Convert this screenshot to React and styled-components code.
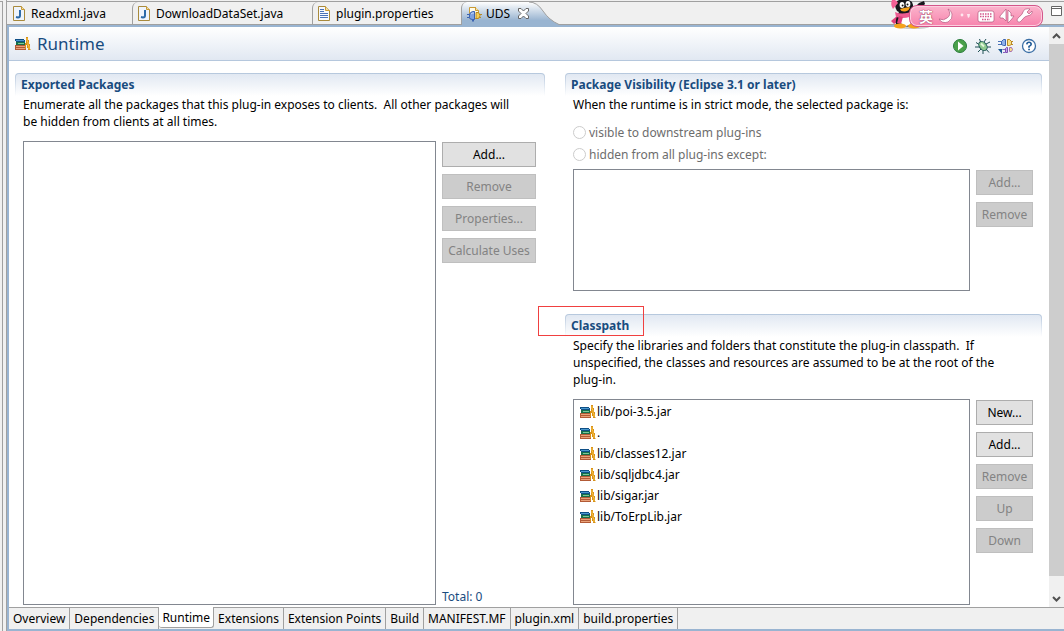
import React from "react";
import styled, { createGlobalStyle, css } from "styled-components";

const GlobalStyle = createGlobalStyle`
  * { box-sizing: border-box; }
  body { margin: 0; background: #f0f0f0; }
  body, button, input {
    font-family: "Noto Sans", "Noto Sans CJK SC", sans-serif;
    font-size: 12px;
    line-height: 17px;
    color: #000;
  }
`

const Workbench = styled.div`
  position: relative;
  display: flex;
  min-height: 100vh;
`

const Neighbour = styled.div`
  flex: none;
  width: 3px;
  margin: 1px 3px 0 0;
  border-top: 1px solid #a0a0a0;
  border-right: 1px solid #a0a0a0;
`

const Editor = styled.div`
  flex: 1;
  min-width: 0;
  display: flex;
  flex-direction: column;
  border-left: 1px solid #a0a0a0;
`

const TabBar = styled.nav`
  display: flex;
  height: 24px;
  margin-top: 1px;
  border-top: 1px solid #a0a0a0;
  border-bottom: 1px solid #a0a0a0;
`

const EditorTab = styled.button`
  display: flex;
  align-items: center;
  gap: 6px;
  width: ${({ $width }) => $width}px;
  height: 22px;
  padding: 0 0 0 5px;
  border: 0;
  border-left: 1px solid ${({ $first }) => ($first ? "transparent" : "#a0a0a0")};
  border-top-left-radius: 6px;
  background: #f0f0f0;
  white-space: nowrap;
`

const ActiveTab = styled.div`
  display: flex;
  align-items: center;
  gap: 4px;
  height: 23px;
  padding-left: 5px;
  border-left: 1px solid #a0a0a0;
  border-top-left-radius: 6px;
  background: linear-gradient(#fff, #99b4d1 80%);
`

const CloseButton = styled.button`
  display: flex;
  margin-left: 4px;
  padding: 0;
  border: 0;
  background: none;
`

const TabCurve = styled.svg`
  flex: none;
  height: 23px;
`

const Frame = styled.div`
  flex: 1;
  display: flex;
  flex-direction: column;
  border: solid #99b4d1;
  border-width: 2px 0 2px 2px;
  background: #fff;
`

const Viewport = styled.div`
  flex: 1;
  display: flex;
`

const Form = styled.main`
  flex: 1;
  min-width: 0;
  display: flex;
  flex-direction: column;
`

const FormHead = styled.header`
  display: flex;
  align-items: center;
  gap: 6px;
  height: 34px;
  padding: 0 12px 0 6px;
  border-bottom: 1px solid #b5c7dd;
  background: linear-gradient(#fff, #e1e8f2);
`

const FormTitle = styled.h1`
  flex: 1;
  margin: 0;
  font-size: 17px;
  font-weight: 400;
  line-height: 22px;
  color: #194c7f;
`

const Actions = styled.div`
  display: flex;
  gap: 7px;
  padding-top: 4px;
`

const IconButton = styled.button`
  display: flex;
  padding: 0;
  border: 0;
  background: none;
`

const Columns = styled.div`
  flex: 1;
  display: grid;
  grid-template-columns: minmax(0, 10fr) minmax(0, 9fr);
  gap: 20px;
  padding: 12px 7px 2px 6px;
`

const Column = styled.div`
  display: flex;
  flex-direction: column;
  gap: 23px;
`

const Section = styled.section`
  position: relative;
  display: flex;
  flex-direction: column;
  ${({ $grow }) => $grow && css`flex: 1;`}
`

const SectionTitle = styled.h2`
  height: 23px;
  margin: 0;
  padding: 2px 5px;
  border: 1px solid transparent;
  border-bottom: 0;
  border-radius: 4px 4px 0 0;
  background:
    linear-gradient(#e1e8f2, #fff) padding-box,
    linear-gradient(#b5c7dd, #fff) border-box;
  font-size: 12px;
  font-weight: 700;
  color: #194c7f;
`

const Description = styled.p`
  margin: 0 0 11px;
  padding: 0 28px 0 8px;
`

const Body = styled.div`
  flex: 1;
  display: flex;
  gap: 6px;
  padding: 0 9px 0 8px;
`

const ListBox = styled.ul`
  flex: 1;
  min-height: ${({ $height }) => $height || 122}px;
  margin: 0;
  padding: 1px 6px;
  border: 1px solid #828790;
  list-style: none;
`

const Entry = styled.li`
  display: flex;
  align-items: center;
  gap: 1px;
  height: 21px;
`

const Buttons = styled.div`
  display: flex;
  flex-direction: column;
  gap: 7px;
  width: ${({ $width }) => $width}px;
  padding-top: 1px;
`

const PushButton = styled.button`
  height: 25px;
  padding: 0;
  border: 1px solid #adadad;
  background: #e1e1e1;
  white-space: nowrap;

  &:disabled {
    border-color: #bfbfbf;
    background: #ccc;
    color: #838383;
  }
`

const Total = styled.span`
  margin-top: auto;
  color: #194c7f;
`

const Options = styled.div`
  display: flex;
  flex-direction: column;
  gap: 5px;
  padding: 0 8px 6px;
`

const Option = styled.label`
  display: flex;
  align-items: center;
  gap: 3px;
  color: #6d6d6d;

  input {
    appearance: none;
    width: 13px;
    height: 13px;
    margin: 0;
    border: 1px solid #ccc;
    border-radius: 50%;
    background: #fff;
  }
`

const Marker = styled.div`
  position: absolute;
  top: -8px;
  left: -27px;
  width: 106px;
  height: 30px;
  border: 1px solid #f04040;
`

const ScrollBar = styled.div`
  display: flex;
  flex-direction: column;
  width: 15px;
  background: #f0f0f0;
`

const ScrollThumb = styled.div`
  flex: 1;
  margin-bottom: 14px;
  background: #cdcdcd;
`

const PageTabs = styled.nav`
  display: flex;
  height: 22px;
  border-top: 1px solid #a0a0a0;
  background: #f0f0f0;
`

const PageTab = styled.button`
  height: 21px;
  padding: 0 4px 1px;
  border: 0;
  border-right: 1px solid #a0a0a0;
  background: none;
  white-space: nowrap;

  ${({ $active }) => $active && css`
    margin-top: -1px;
    padding: 1px 3px 0;
    border-bottom: 1px solid #a0a0a0;
    border-radius: 0 0 3px 3px;
    background: #fff;
  `}
`

const ViewButton = styled(IconButton)`
  margin: 4px 2px 0 auto;
`

const ImeBar = styled.div`
  position: absolute;
  top: 0;
  right: 21px;
  display: flex;
  align-items: flex-start;
`

const ImePill = styled.div`
  display: flex;
  align-items: center;
  justify-content: space-between;
  width: 134px;
  height: 22px;
  margin: 5px 0 0 -22px;
  padding: 0 8px 0 9px;
  border: 1px solid #d3568a;
  border-radius: 8px;
  background: linear-gradient(#fbb4cc, #f783ad);
  box-shadow: inset 0 0 0 1px #fccfdf;
  color: #fff;
  font-size: 14px;
  font-weight: 700;
  text-shadow: 0 0 1px #8a3355, 0 0 1px #8a3355;
`

const JavaIcon = () => (
  <svg width="12" height="15" viewBox="0 0 12 15">
    <path d="M.5.5h8l3 3v11H.5z" fill="#eef4fc" stroke="#a98a3c" />
    <path d="M8.5.5v3h3" fill="#f3dfa5" stroke="#c99a35" />
    <path d="M7 4v5.5Q7 11.500 5 11.500L3 11" fill="none" stroke="#2c6aa8" strokeWidth="2" />
  </svg>
)

const TextFileIcon = () => (
  <svg width="12" height="15" viewBox="0 0 12 15">
    <path d="M.5.5h7l4 4v10H.5z" fill="#f6f9ff" stroke="#a98a3c" />
    <path d="M7.500.5v4h4" fill="#f3dfa5" stroke="#c99a35" />
    <path d="M2 3.500h4M2 5.500h4M2 7.500h8M2 9.500h8M2 11.500h8" stroke="#4a72b8" />
  </svg>
)

const PluginIcon = () => (
  <svg width="15" height="16" viewBox="0 0 15 16">
    <path d="M2.500 1.500h6l3 3v8h-9z" fill="#fffbe8" stroke="#c99a35" />
    <path d="M8.500 1v3.500h3" fill="#f3dfa5" stroke="#c99a35" />
    <path d="M9 6.500h2q2 1 2 3t-2 3H9z" fill="#f4cf5a" stroke="#b98a25" />
    <path d="M12 8.500h3M12 11.500h2" stroke="#b98a25" />
    <path d="M0 8.500h3M0 11.500h3" stroke="#3c63b0" />
    <path d="M2.500 9q0-2.500 3-3.500h2v8h-2q-3 0-3-2z" fill="#7da0e0" stroke="#3c63b0" />
    <path d="M4 8q1-1 3-1" fill="none" stroke="#c5d7f7" />
    <path d="M6 13.500v2" stroke="#3c63b0" strokeWidth="2" />
  </svg>
)

const CloseIcon = () => (
  <svg width="11" height="11" viewBox="0 0 11 11">
    <path d="M.5.5h2.500l2.500 2.500L8 .5h2.500V3L8 5.500l2.500 2.500v2.500H8L5.500 8 3 10.500H.5V8L3 5.500.5 3z" fill="#fff" stroke="#666" />
  </svg>
)

const LibraryIcon = () => (
  <svg width="16" height="13" viewBox="0 0 16 13">
    <path d="M0 2h9v1h1v2H1V4H0z" fill="#0f4f86" />
    <path d="M1 3h8v1H1z" fill="#4b9ad0" />
    <path d="M1 5h9v3H1z" fill="#17704a" />
    <path d="M3 6h6v1H3z" fill="#7cc79b" />
    <path d="M0 8h11v5H0z" fill="#b25a36" />
    <path d="M1 9h9v1H1zM1 11h9v1H1z" fill="#e9a27a" />
    <path d="M11 0h2v3h1v4h1v5l1 1h-3v-2h-1V8h-1v4h-1V6h1z" fill="#d8911a" />
    <path d="M12 1v3l1 1v3l1 1v3" fill="none" stroke="#f9c545" />
  </svg>
)

const RunIcon = () => (
  <svg width="16" height="16" viewBox="0 0 16 16">
    <circle cx="8" cy="8" r="6.500" fill="#4aa04a" stroke="#2a7d3c" />
    <path d="M6 3.500v9L11.500 8z" fill="#fff" />
  </svg>
)

const DebugIcon = () => (
  <svg width="16" height="16" viewBox="0 0 16 16">
    <path d="M6 5L4.500 1M9 4l2-3M5 7L1 4.500M5 9H0M6 11l-3 3M8 12v4M11 6l4-2M12 9h4M11 11l3 3.500" stroke="#1f4f55" />
    <ellipse cx="8" cy="8" rx="3.500" ry="5" fill="#8fca8f" stroke="#1f5a55" transform="rotate(-40 8 8)" />
    <path d="M6 5.500l3 3" stroke="#e3f7da" strokeWidth="2" />
  </svg>
)

const ExportIcon = () => (
  <svg width="16" height="16" viewBox="0 0 16 16">
    <path d="M0 3.500h4M0 6.500h4" stroke="#4a72b8" />
    <path d="M3.500 3.500l2-2h2v6h-2l-2-1z" fill="#8fb0ea" stroke="#3c63b0" />
    <path d="M9.500 1.500h2l2 2v3l-2 1h-2z" fill="#f9df85" stroke="#b98a25" />
    <path d="M13 3.500h2M13 6.500h2" stroke="#b98a25" />
    <path d="M5 11.500h2M5 14.500h2" stroke="#8a5fc0" />
    <path d="M7.500 10.500l1-1h1v5h-2z" fill="#c5a5ee" stroke="#7b4fb0" />
    <path d="M11.500 9.500h2l1 2-1 2h-2z" fill="#f9df85" stroke="#a76fb0" />
    <path d="M0 11h5l-1 1v4z" fill="#1b5a96" />
  </svg>
)

const HelpIcon = () => (
  <svg width="16" height="16" viewBox="0 0 16 16">
    <circle cx="8" cy="8" r="6.500" fill="#fff" stroke="#3a6ea5" strokeWidth="1.300" />
    <path d="M5.800 6.300Q6 4.300 8 4.300t2.200 1.900Q10.200 7.300 8 8.400v1.300" fill="none" stroke="#1f5a96" strokeWidth="1.600" />
    <path d="M7.200 10.800h1.700v1.500H7.200z" fill="#1f5a96" />
  </svg>
)

const MaximizeIcon = () => (
  <svg width="11" height="11" viewBox="0 0 11 11">
    <path d="M.5.5h10v9H.5zM.5 2.500h10" fill="#fff" stroke="#666" />
  </svg>
)

const Chevron = ({ down }) => (
  <svg width="15" height="17" viewBox="0 0 15 17">
    <path d={down ? "M4 7l3.500 3.500L11 7" : "M4 11l3.500-3.500L11 11"} fill="none" stroke="#505050" strokeWidth="2" />
  </svg>
)

const Penguin = () => (
  <svg width="40" height="30" viewBox="0 0 40 30">
    <ellipse cx="22" cy="27" rx="16" ry="2" fill="#bbb" opacity=".7" />
    <path d="M6 16L0 21l3 3 5-3z" fill="#e0417c" />
    <path d="M8 12q-4 7-3 13l16 2 6-5-3-12z" fill="#17171c" />
    <path d="M22 9l6-6 5-2 1 3-9 9z" fill="#17171c" />
    <ellipse cx="15" cy="20" rx="6" ry="6" fill="#fff" />
    <path d="M5 2Q12-4 21 2q3 7-1 10-7 4-14-1Q3 7 5 2z" fill="#17171c" />
    <path d="M1 0q4-1 6 3L2 9Q-1 5 1 0z" fill="#f25f95" />
    <ellipse cx="11" cy="5" rx="2.400" ry="3" fill="#fff" />
    <ellipse cx="17" cy="4" rx="2.400" ry="3" fill="#fff" />
    <circle cx="11.600" cy="5.500" r="1" fill="#111" />
    <circle cx="16.500" cy="4.500" r="1" fill="#111" />
    <path d="M9 9q5-1.500 10-2-1 4-5 4.500T9 9z" fill="#f5a21b" />
    <path d="M4 12q9 4 19-2l1 4q-8 6-19 3z" fill="#ee5b92" />
    <path d="M8 16l4 1-2 7-4-1z" fill="#e0417c" />
    <ellipse cx="9" cy="26" rx="6" ry="2.500" fill="#f5a21b" />
    <ellipse cx="23" cy="26" rx="6" ry="2.500" fill="#f5a21b" />
  </svg>
)

const ImeIcons = () => (
  <svg width="95" height="16" viewBox="0 0 95 16" fill="#fff" stroke="#a84870" strokeWidth=".6">
    <path d="M9 1q4 6-1 9-3 3-8 1 3 5 9 3 5-3 4-8Q12 2 9 1z" />
    <circle cx="23" cy="7" r="1.400" stroke="none" opacity=".75" />
    <path d="M28 6h3q0 3-2 4z" stroke="none" opacity=".75" />
    <rect x="39" y="3" width="16" height="11" rx="2" />
    <path d="M41 6h12M41 8.500h12M43 11.500h8" stroke="#d3568a" strokeWidth="1.400" strokeDasharray="1.500 1" />
    <path d="M67 1v12l-3-3H61V8zM69 15V2l3 3v3h3l-3 4z" />
    <path d="M93 3l-3 3-2-2 3-3q-6-1-7 3 0 2-5 6-2 2 0 4 2 1 4-2 3-4 5-4 6-1 5-5z" />
  </svg>
)

const exportedActions = ["Remove", "Properties...", "Calculate Uses"]
const classpath = ["lib/poi-3.5.jar", ".", "lib/classes12.jar", "lib/sqljdbc4.jar", "lib/sigar.jar", "lib/ToErpLib.jar"]
const pages = [
  "Overview", "Dependencies", "Runtime", "Extensions", "Extension Points",
  "Build", "MANIFEST.MF", "plugin.xml", "build.properties",
]

function EditorTabs() {
  return (
    <TabBar aria-label="Editors">
      <EditorTab $first $width={125}><JavaIcon />Readxml.java</EditorTab>
      <EditorTab $width={180}><JavaIcon />DownloadDataSet.java</EditorTab>
      <EditorTab $width={149}><TextFileIcon />plugin.properties</EditorTab>
      <ActiveTab>
        <PluginIcon />UDS
        <CloseButton aria-label="Close"><CloseIcon /></CloseButton>
      </ActiveTab>
      <TabCurve width="34" viewBox="0 0 34 23">
        <defs>
          <linearGradient id="tab" x2="0" y2="1">
            <stop stopColor="#fff" />
            <stop offset=".8" stopColor="#99b4d1" />
          </linearGradient>
        </defs>
        <path d="M0 0Q8 0 14 9T30 22.500h4V23H0z" fill="url(#tab)" />
        <path d="M0 0Q8 0 14 9T30 22.500h4" fill="none" stroke="#a0a0a0" />
      </TabCurve>
      <ViewButton aria-label="Maximize"><MaximizeIcon /></ViewButton>
    </TabBar>
  )
}

function ExportedPackages() {
  return (
    <Section $grow>
      <SectionTitle>Exported Packages</SectionTitle>
      <Description>
        Enumerate all the packages that this plug-in exposes to clients.&nbsp; All other packages will be hidden from clients at all times.
      </Description>
      <Body>
        <ListBox aria-label="Exported packages" />
        <Buttons $width={94}>
          <PushButton>Add...</PushButton>
          {exportedActions.map(i => <PushButton key={i} disabled>{i}</PushButton>)}
          <Total>Total: 0</Total>
        </Buttons>
      </Body>
    </Section>
  )
}

function PackageVisibility() {
  return (
    <Section>
      <SectionTitle>Package Visibility (Eclipse 3.1 or later)</SectionTitle>
      <Description>When the runtime is in strict mode, the selected package is:</Description>
      <Options>
        <Option><input type="radio" name="visibility" disabled />visible to downstream plug-ins</Option>
        <Option><input type="radio" name="visibility" disabled />hidden from all plug-ins except:</Option>
      </Options>
      <Body>
        <ListBox aria-label="Visible to" />
        <Buttons $width={57}>
          <PushButton disabled>Add...</PushButton>
          <PushButton disabled>Remove</PushButton>
        </Buttons>
      </Body>
    </Section>
  )
}

function Classpath() {
  return (
    <Section $grow>
      <SectionTitle>Classpath</SectionTitle>
      <Description>
        Specify the libraries and folders that constitute the plug-in classpath.&nbsp; If unspecified, the classes and resources are assumed to be at the root of the plug-in.
      </Description>
      <Body>
        <ListBox aria-label="Classpath" $height={180}>
          {classpath.map(i => <Entry key={i}><LibraryIcon />{i}</Entry>)}
        </ListBox>
        <Buttons $width={57}>
          <PushButton>New...</PushButton>
          <PushButton>Add...</PushButton>
          <PushButton disabled>Remove</PushButton>
          <PushButton disabled>Up</PushButton>
          <PushButton disabled>Down</PushButton>
        </Buttons>
      </Body>
      <Marker />
    </Section>
  )
}

export default function App() {
  return (
    <Workbench>
      <GlobalStyle />
      <Neighbour />
      <Editor>
        <EditorTabs />
        <Frame>
          <Viewport>
            <Form>
              <FormHead>
                <LibraryIcon />
                <FormTitle>Runtime</FormTitle>
                <Actions>
                  <IconButton aria-label="Run"><RunIcon /></IconButton>
                  <IconButton aria-label="Debug"><DebugIcon /></IconButton>
                  <IconButton aria-label="Export"><ExportIcon /></IconButton>
                  <IconButton aria-label="Help"><HelpIcon /></IconButton>
                </Actions>
              </FormHead>
              <Columns>
                <Column>
                  <ExportedPackages />
                </Column>
                <Column>
                  <PackageVisibility />
                  <Classpath />
                </Column>
              </Columns>
            </Form>
            <ScrollBar>
              <Chevron />
              <ScrollThumb />
              <Chevron down />
            </ScrollBar>
          </Viewport>
          <PageTabs aria-label="Pages">
            {pages.map(i => <PageTab key={i} $active={i === "Runtime"}>{i}</PageTab>)}
          </PageTabs>
        </Frame>
      </Editor>
      <ImeBar>
        <Penguin />
        <ImePill>英<ImeIcons /></ImePill>
      </ImeBar>
    </Workbench>
  )
}
